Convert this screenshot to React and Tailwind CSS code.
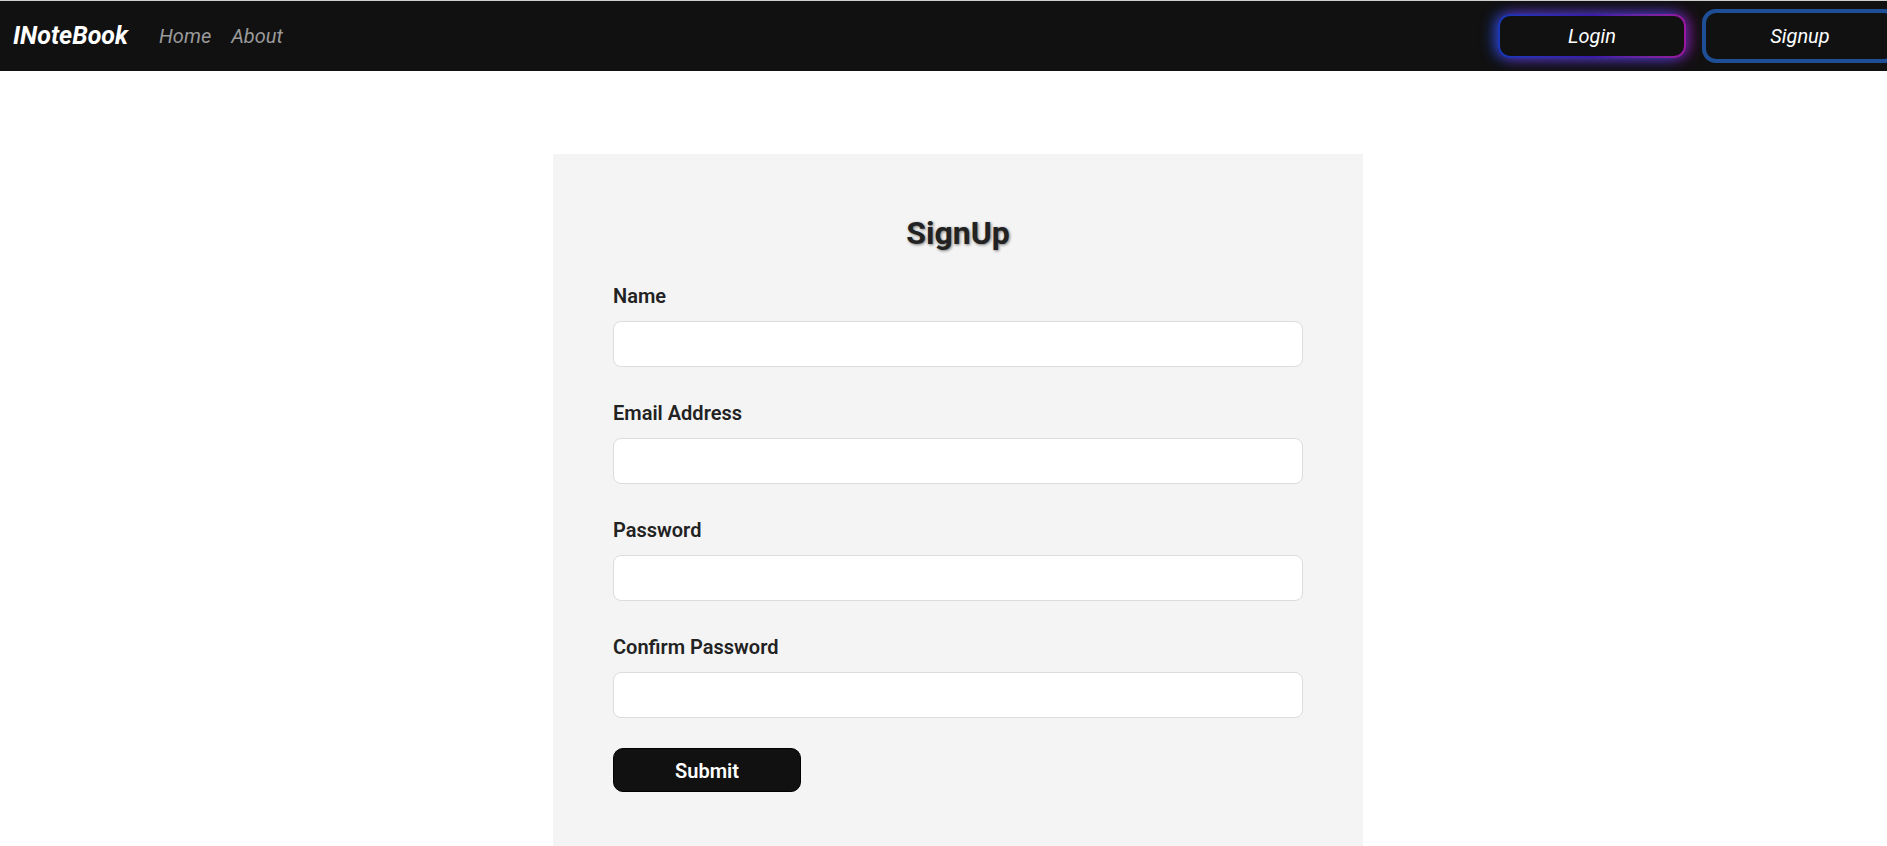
import React from 'react';

const Field = ({ label, type = 'text', last = false }) => (
  <div className={last ? 'mb-[30px]' : 'mb-[35px]'}>
    <label className="block text-[20px] font-semibold text-[#222] leading-[23px] mb-[13px]">{label}</label>
    <input
      type={type}
      className="block w-full h-[46px] bg-white border border-[#dcdcdc] rounded-[8px] px-3 outline-none"
    />
  </div>
);

const Navbar = () => (
  <nav className="h-[71px] bg-[#111111] border-t border-[#cfcfcf] flex items-center justify-between pl-[13px] overflow-hidden">
    <div className="flex items-center">
      <span className="text-[25px] font-bold italic text-white">INoteBook</span>
      <a className="ml-[31px] text-[20px] italic text-[#9a9a9a]">Home</a>
      <a className="ml-[20px] text-[20px] italic text-[#9a9a9a]">About</a>
    </div>
    <div className="flex items-center mr-[-11px]">
      <div className="p-[2px] rounded-[12px] bg-gradient-to-r from-[#1838b8] via-[#3a1aa8] to-[#9a169e] shadow-[-4px_0_14px_rgba(30,90,255,0.7),4px_0_14px_rgba(200,20,210,0.6)]">
        <button className="w-[184px] h-[40px] rounded-[10px] bg-[#111111] text-white text-[20px] italic">Login</button>
      </div>
      <button className="ml-[16px] w-[196px] h-[54px] rounded-[14px] border-4 border-[#1e4f96] bg-[#111111] text-white text-[20px] italic">
        Signup
      </button>
    </div>
  </nav>
);

export default function App() {
  return (
    <div className="min-h-screen bg-white font-['Roboto',sans-serif] overflow-hidden">
      <Navbar />
      <div className="flex justify-center pl-[29px] mt-[83px]">
        <div className="w-[810px] bg-[#f4f4f4] px-[60px] pt-[61px] pb-[60px]">
          <h1 className="text-center text-[32px] font-bold text-[#222] leading-[37px] mb-[33px] [text-shadow:1px_1px_3px_rgba(0,0,0,0.5)]">
            SignUp
          </h1>
          <form onSubmit={(e) => e.preventDefault()}>
            <Field label="Name" />
            <Field label="Email Address" type="email" />
            <Field label="Password" type="password" />
            <Field label="Confirm Password" type="password" last />
            <button
              type="submit"
              className="w-[188px] h-[44px] pt-[2px] rounded-[10px] bg-[#111111] border border-black text-white text-[20px] font-semibold"
            >
              Submit
            </button>
          </form>
        </div>
      </div>
    </div>
  );
}
